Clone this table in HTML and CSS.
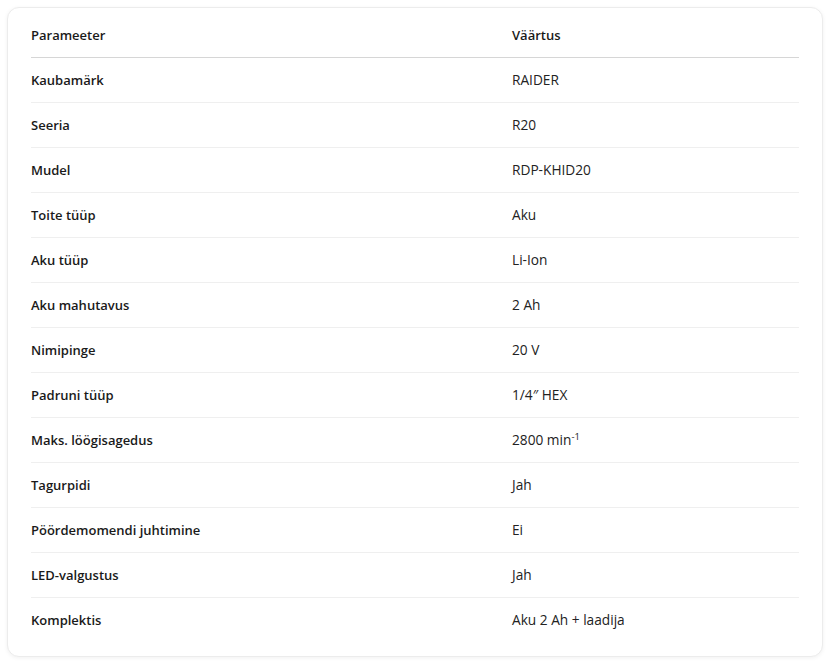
FILE: index.html
```html
<!DOCTYPE html>
<html lang="et">
<head>
<meta charset="utf-8">
<title>Tehnilised andmed</title>
<link rel="stylesheet" href="styles.css">
</head>
<body>
<div class="card">
  <table class="spec">
    <thead>
      <tr><th class="col-param">Parameeter</th><th>Väärtus</th></tr>
    </thead>
    <tbody>
      <tr><td class="param">Kaubamärk</td><td>RAIDER</td></tr>
      <tr><td class="param">Seeria</td><td>R20</td></tr>
      <tr><td class="param">Mudel</td><td>RDP-KHID20</td></tr>
      <tr><td class="param">Toite tüüp</td><td>Aku</td></tr>
      <tr><td class="param">Aku tüüp</td><td>Li-Ion</td></tr>
      <tr><td class="param">Aku mahutavus</td><td>2 Ah</td></tr>
      <tr><td class="param">Nimipinge</td><td>20 V</td></tr>
      <tr><td class="param">Padruni tüüp</td><td>1/4″ HEX</td></tr>
      <tr><td class="param">Maks. löögisagedus</td><td>2800 min<sup>-1</sup></td></tr>
      <tr><td class="param">Tagurpidi</td><td>Jah</td></tr>
      <tr><td class="param">Pöördemomendi juhtimine</td><td>Ei</td></tr>
      <tr><td class="param">LED-valgustus</td><td>Jah</td></tr>
      <tr><td class="param">Komplektis</td><td>Aku 2 Ah + laadija</td></tr>
    </tbody>
  </table>
</div>
</body>
</html>
```
FILE: styles.css
```css
html, body {
  margin: 0;
  background: #ffffff;
}
body {
  padding: 7px 5px 6px 7px;
  font-family: "Segoe UI", "Open Sans", "Noto Sans", sans-serif;
  font-size: 13.7px;
  color: #1b1b1b;
}
.card {
  background: #fff;
  border: 1px solid #ececec;
  border-radius: 12px;
  box-shadow: 0 1px 4px rgba(0, 0, 0, 0.06);
  padding: 5px 23px 14px 23px;
}
.spec {
  width: 100%;
  border-collapse: collapse;
}
.spec th,
.spec td {
  text-align: left;
  padding: 0;
  height: 44px;
  vertical-align: middle;
  line-height: 20px;
}
.spec th {
  font-size: 13px;
  font-weight: 600;
  border-bottom: 1px solid #d6d6d6;
  color: #1a1a1a;
}
.spec td {
  border-bottom: 1px solid #efefef;
  color: #222;
}
.spec tbody tr:last-child td {
  border-bottom: none;
}
.col-param {
  width: 481px;
}
.spec td.param {
  font-size: 13px;
  font-weight: 600;
  color: #1a1a1a;
}
sup {
  font-size: 9.5px;
  line-height: 0;
  vertical-align: 5px;
}
```
